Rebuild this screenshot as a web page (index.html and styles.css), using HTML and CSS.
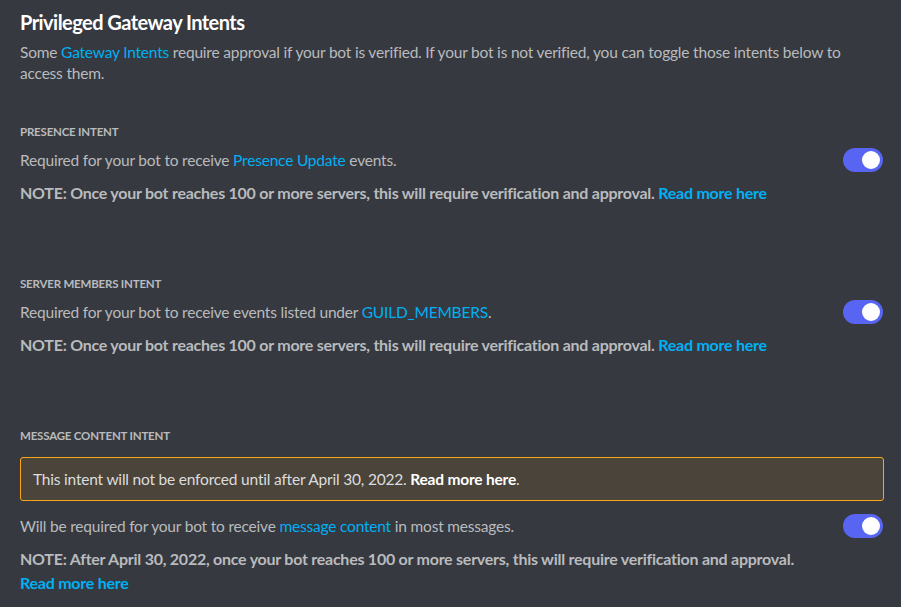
FILE: index.html
```html
<!DOCTYPE html>
<html lang="en">
<head>
<meta charset="utf-8">
<title>Privileged Gateway Intents</title>
<link rel="stylesheet" href="styles.css">
</head>
<body>
<main class="page">
  <h2 class="title">Privileged Gateway Intents</h2>
  <p class="desc">Some <a class="link" href="#">Gateway Intents</a> require approval if your bot is verified. If your bot is not verified, you can toggle those intents below to access them.</p>

  <section class="intent intent-first">
    <h3 class="label">Presence Intent</h3>
    <div class="row">
      <p class="text">Required for your bot to receive <a class="link" href="#">Presence Update</a> events.</p>
      <span class="toggle"><span class="knob"></span></span>
    </div>
    <p class="note">NOTE: Once your bot reaches 100 or more servers, this will require verification and approval. <a class="note-link" href="#">Read more here</a></p>
  </section>

  <section class="intent">
    <h3 class="label">Server Members Intent</h3>
    <div class="row">
      <p class="text">Required for your bot to receive events listed under <a class="link" href="#">GUILD_MEMBERS</a>.</p>
      <span class="toggle"><span class="knob"></span></span>
    </div>
    <p class="note">NOTE: Once your bot reaches 100 or more servers, this will require verification and approval. <a class="note-link" href="#">Read more here</a></p>
  </section>

  <section class="intent">
    <h3 class="label label-boxed">Message Content Intent</h3>
    <div class="warning">This intent will not be enforced until after April 30, 2022. <strong class="warning-strong">Read more here</strong>.</div>
    <div class="row row-after-box">
      <p class="text">Will be required for your bot to receive <a class="link" href="#">message content</a> in most messages.</p>
      <span class="toggle"><span class="knob"></span></span>
    </div>
    <p class="note">NOTE: After April 30, 2022, once your bot reaches 100 or more servers, this will require verification and approval. <a class="note-link" href="#">Read more here</a></p>
  </section>
</main>
</body>
</html>
```

FILE: styles.css
```css
html, body {
  margin: 0;
  padding: 0;
  background: #36393f;
}

body {
  font-family: "Lato", "Open Sans", sans-serif;
  color: #b9bbbe;
}

.page {
  width: 864px;
  padding: 10px 0 0 20px;
}

.title {
  margin: 0;
  font-size: 20px;
  line-height: 24px;
  font-weight: 700;
  letter-spacing: -0.55px;
  color: #ffffff;
}

.desc {
  margin: 8px 0 0;
  font-size: 15.5px;
  letter-spacing: -0.2px;
  line-height: 21px;
  color: #b9bbbe;
}

.link {
  color: #00b0f4;
  text-decoration: none;
}

.intent {
  margin-top: 71px;
}

.intent-first {
  margin-top: 40px;
}

.label {
  margin: 0;
  font-size: 11.5px;
  letter-spacing: -0.2px;
  line-height: 16px;
  font-weight: 700;
  text-transform: uppercase;
  color: #b9bbbe;
}

.row {
  margin-top: 8px;
  display: flex;
  align-items: center;
  justify-content: space-between;
  height: 24px;
}

.text {
  margin: 0;
  font-size: 15.5px;
  letter-spacing: -0.2px;
  line-height: 20px;
  color: #b9bbbe;
}

.toggle {
  flex: none;
  width: 40px;
  height: 24px;
  border-radius: 12px;
  background: #5865f2;
  display: flex;
  align-items: center;
  justify-content: flex-end;
  padding: 0 3px;
  box-sizing: border-box;
  margin-right: 1px;
}

.knob {
  width: 18px;
  height: 18px;
  border-radius: 50%;
  background: #ffffff;
}

.note {
  margin: 9px 0 0;
  font-family: "Lato", sans-serif;
  font-size: 16px;
  letter-spacing: -0.25px;
  line-height: 24px;
  font-weight: 700;
  color: #b9bbbe;
}

.note-link {
  color: #00b0f4;
  text-decoration: none;
  white-space: nowrap;
}

.label-boxed {
  margin-bottom: 13px;
}

.warning {
  border: 1px solid #faa61a;
  border-radius: 3px;
  background: #4a443b;
  padding: 10px 12px;
  font-size: 15.5px;
  letter-spacing: -0.2px;
  line-height: 22px;
  color: #dcddde;
}

.warning-strong {
  font-weight: 700;
  color: #ffffff;
}

.row-after-box {
  margin-top: 13px;
}
```
